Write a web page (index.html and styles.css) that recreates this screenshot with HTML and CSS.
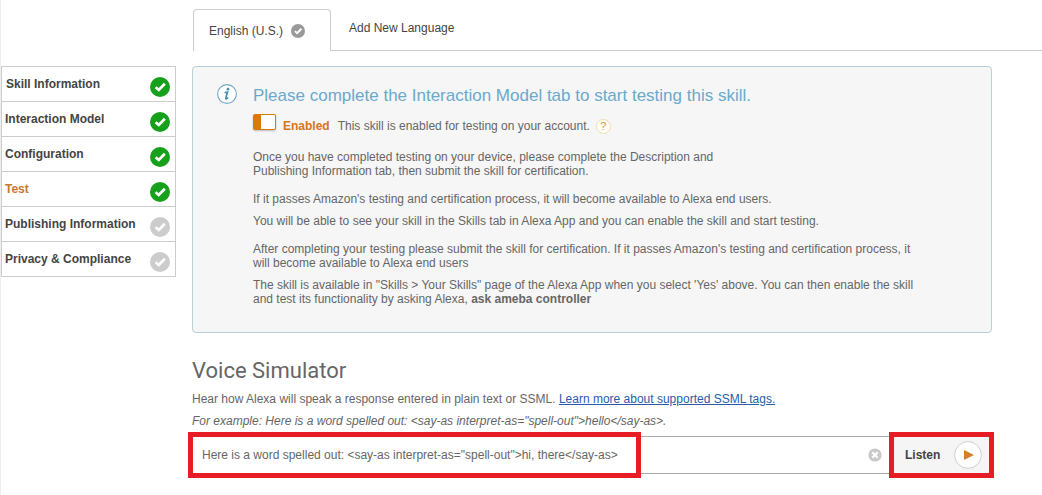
FILE: index.html
```html
<!DOCTYPE html>
<html lang="en">
<head>
<meta charset="utf-8">
<meta name="viewport" content="width=device-width, initial-scale=1">
<title>Test - Alexa Skill</title>
<link rel="stylesheet" href="styles.css">
</head>
<body>
<svg class="symbols" aria-hidden="true">
  <symbol id="check" viewBox="0 0 20 20">
    <circle cx="10" cy="10" r="10" fill="currentColor"/>
    <path d="M5.6 10.2l3.2 2.8 6-6.2" fill="none" stroke="#fff" stroke-width="2.7"/>
  </symbol>
</svg>
<div class="page">
  <nav class="steps" aria-label="Skill steps">
    <a class="step step-first" href="#info">Skill Information<svg class="badge done"><use href="#check"/></svg></a>
    <a class="step" href="#model">Interaction Model<svg class="badge done"><use href="#check"/></svg></a>
    <a class="step" href="#config">Configuration<svg class="badge done"><use href="#check"/></svg></a>
    <a class="step current" href="#test" aria-current="page">Test<svg class="badge done"><use href="#check"/></svg></a>
    <a class="step" href="#publishing">Publishing Information<svg class="badge"><use href="#check"/></svg></a>
    <a class="step" href="#privacy">Privacy &amp; Compliance<svg class="badge"><use href="#check"/></svg></a>
  </nav>
  <main class="main">
    <div class="tabs">
      <button class="tab tab-active" type="button">English (U.S.)<svg class="tab-check"><use href="#check"/></svg></button>
      <button class="tab tab-add" type="button">Add New Language</button>
    </div>
    <div class="content">
      <section class="panel">
        <svg class="info" viewBox="0 0 20 20" aria-hidden="true">
          <circle cx="10" cy="10" r="9.4" fill="#fff" stroke="#6fa9c4" stroke-width="1.1"/>
          <circle cx="11" cy="5.2" r="1.4" fill="#4a90b0"/>
          <path d="M7.6 8.6l2.9-.5-1.6 5.6q-.3 1.3.5 1 .9-.3 1.6-1.3" fill="none" stroke="#4a90b0" stroke-width="1.7"/>
        </svg>
        <div class="panel-body">
          <h1 class="panel-title">Please complete the Interaction Model tab to start testing this skill.</h1>
          <div class="enable">
            <input class="switch" id="enabled" type="checkbox" checked>
            <label class="enable-label" for="enabled">Enabled</label>
            <span class="enable-text">This skill is enabled for testing on your account.</span>
            <button class="help" type="button" aria-label="Help">?</button>
          </div>
          <p class="copy copy-group">Once you have completed testing on your device, please complete the Description and<br>Publishing Information tab, then submit the skill for certification.</p>
          <p class="copy copy-group">If it passes Amazon's testing and certification process, it will become available to Alexa end users.</p>
          <p class="copy">You will be able to see your skill in the Skills tab in Alexa App and you can enable the skill and start testing.</p>
          <p class="copy copy-group">After completing your testing please submit the skill for certification. If it passes Amazon's testing and certification process, it will become available to Alexa end users</p>
          <p class="copy">The skill is available in "Skills &gt; Your Skills" page of the Alexa App when you select 'Yes' above. You can then enable the skill and test its functionality by asking Alexa, <strong>ask ameba controller</strong></p>
        </div>
      </section>
      <section class="voice">
        <h2 class="voice-title">Voice Simulator</h2>
        <p class="voice-text"><label for="speech">Hear how Alexa will speak a response entered in plain text or SSML.</label> <a class="link" href="#ssml">Learn more about supported SSML tags.</a></p>
        <p class="voice-text"><em>For example: Here is a word spelled out: &lt;say-as interpret-as="spell-out"&gt;hello&lt;/say-as&gt;.</em></p>
        <form class="speak">
          <div class="field">
            <input class="field-input" id="speech" type="text" value="Here is a word spelled out: &lt;say-as interpret-as=&quot;spell-out&quot;&gt;hi, there&lt;/say-as&gt;">
            <button class="clear" type="button" aria-label="Clear"><svg class="clear-icon" viewBox="0 0 14 14"><circle cx="7" cy="7" r="6.6" fill="#c9c9c9"/><path d="M4.3 4.3l5.4 5.4M9.7 4.3L4.3 9.7" stroke="#fff" stroke-width="2.2"/></svg></button>
            <span class="mark mark-text"></span>
          </div>
          <button class="listen" type="button">Listen<svg class="play" viewBox="0 0 28 28"><circle cx="14" cy="14" r="13.4" fill="#fff" stroke="#cfcfcf"/><path d="M10 9l10 5-10 5z" fill="#d4802a"/></svg><span class="mark mark-listen"></span></button>
        </form>
      </section>
    </div>
  </main>
</div>
</body>
</html>
```
FILE: styles.css
```css
* { box-sizing: border-box; }
body {
  margin: 0;
  background: #fff;
  color: #666;
  font: 12px/14px "Liberation Sans", Arial, sans-serif;
}
button, input { font: inherit; color: inherit; margin: 0; }
button { padding: 0; border: 0; background: none; }
h1, h2, p { margin: 0; font-weight: normal; }
.symbols { position: absolute; width: 0; height: 0; }

.page {
  display: flex;
  align-items: flex-start;
  gap: 16px;
  min-height: 100vh;
  border-left: 1px solid #eee;
}
.steps {
  flex: none;
  width: 175px;
  margin-top: 66px;
  border: 1px solid #ccc;
  border-bottom: 0;
}
.step {
  display: flex;
  align-items: center;
  justify-content: space-between;
  height: 35px;
  padding: 0 5px 0 3px;
  border-bottom: 1px solid #ccc;
  color: #444;
  font-weight: bold;
  text-decoration: none;
}
.step-first { padding-left: 4px; }
.current { color: #c9772b; }
.badge { flex: none; width: 20px; height: 20px; margin-top: 6px; color: #ccc; }
.done { color: #17a01b; }

.main { flex: 1; min-width: 0; }
.tabs {
  display: flex;
  padding: 9px 0 0 1px;
}
.tab { height: 42px; color: #444; text-align: left; }
.tab-active {
  display: flex;
  align-items: center;
  gap: 8px;
  width: 138px;
  padding-left: 15px;
  border: 1px solid #ccc;
  border-bottom: 0;
  border-radius: 4px 4px 0 0;
}
.tab-check { width: 14px; height: 14px; color: #999; }
.tab-add {
  flex: 1;
  padding: 0 0 4px 18px;
  border-bottom: 1px solid #ccc;
}

.content { padding: 15px 50px 16px 0; }
.panel {
  display: flex;
  gap: 16px;
  padding: 17px 64px 26px 24px;
  border: 1px solid #b9d0d8;
  border-radius: 4px;
  background: #f6f6f6;
}
.info { flex: none; width: 20px; height: 20px; }
.panel-body { flex: 1; min-width: 0; }
.panel-title { color: #6ba9cd; font-size: 17px; line-height: 24px; }
.enable {
  display: flex;
  align-items: flex-end;
  padding: 6px 0 2px;
  line-height: 16px;
}
.switch {
  appearance: none;
  flex: none;
  width: 23px;
  height: 16px;
  margin: 0 7px 4px 0;
  border: 1px solid #d97a08;
  border-left-width: 8px;
  border-radius: 2px;
  background: #fff;
  box-shadow: 0 1px 2px #bbb;
}
.enable-label { margin-right: 8px; color: #d9731f; font-weight: bold; }
.help {
  width: 15px;
  height: 15px;
  margin-left: 6px;
  border: 1px solid #eeddb5;
  border-radius: 50%;
  background: #fffdf5;
  color: #e2963f;
  font-size: 11px;
  line-height: 13px;
}
.copy { margin-top: 8px; }
.copy-group { margin-top: 14px; }

.voice { padding-top: 24px; }
.voice-title { font-family: Roboto, sans-serif; font-size: 22px; line-height: 27px; }
.voice-text { margin-top: 8px; }
.link { color: #2a5caa; text-decoration: underline; }
.speak { display: flex; margin-top: 8px; }
.field {
  position: relative;
  display: flex;
  align-items: center;
  flex: 1;
  min-width: 0;
  height: 38px;
  padding: 0 10px 0 9px;
  border: 1px solid #aaa;
  border-right: 0;
}
.field-input { flex: 1; min-width: 0; padding: 0; border: 0; outline: 0; background: none; }
.clear, .clear-icon { display: block; width: 14px; height: 14px; }
.listen {
  position: relative;
  display: flex;
  align-items: center;
  justify-content: space-between;
  width: 100px;
  padding: 0 10px 0 13px;
  background: #f5f5f5;
  color: #444;
  font-weight: bold;
}
.play { width: 28px; height: 28px; }
.mark { position: absolute; border: 5px solid #e71d25; pointer-events: none; }
.mark-text { left: -5px; top: -5px; width: 453px; height: 46px; }
.mark-listen { inset: -4px -2px -4px -3px; }
```
